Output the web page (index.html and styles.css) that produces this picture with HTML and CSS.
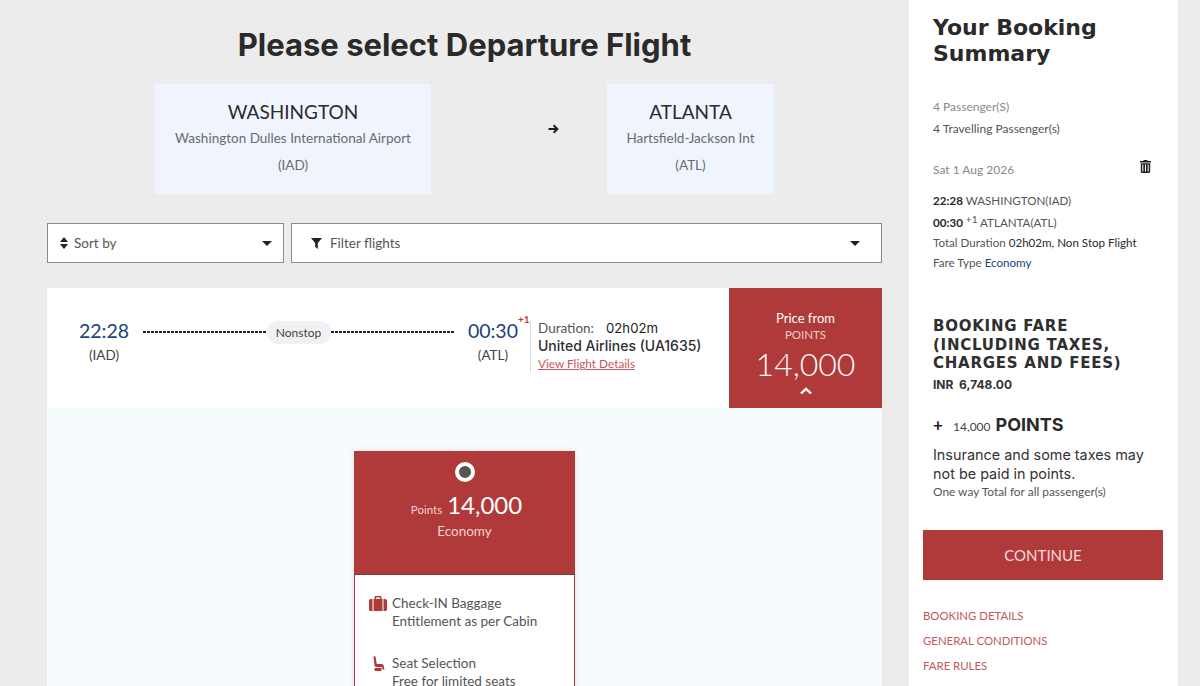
FILE: index.html
```html
<!DOCTYPE html>
<html lang="en">
<head>
    <meta charset="UTF-8">
    <title>Please select Departure Flight</title>
    <link rel="stylesheet" href="styles.css">
</head>
<body>
    <div class="page">
        <main class="main">
            <h1 class="title">Please select Departure Flight</h1>

            <div class="route">
                <div class="city city-from">
                    <div class="city-name">WASHINGTON</div>
                    <div class="city-line">Washington Dulles International Airport</div>
                    <div class="city-line">(IAD)</div>
                </div>
                <div class="route-arrow">
                    <svg width="11" height="10" viewBox="0 0 11 10"><path d="M0.5 5H9M5.6 1.2L9.4 5L5.6 8.8" fill="none" stroke="#222" stroke-width="2"/></svg>
                </div>
                <div class="city city-to">
                    <div class="city-name">ATLANTA</div>
                    <div class="city-line">Hartsfield-Jackson Int</div>
                    <div class="city-line">(ATL)</div>
                </div>
            </div>

            <div class="filters">
                <div class="select select-sort">
                    <svg class="sort-icon" width="8" height="12" viewBox="0 0 8 12"><path d="M4 0L8 5H0ZM0 7H8L4 12Z" fill="#222"/></svg>
                    <span class="select-text">Sort by</span>
                    <span class="caret"></span>
                </div>
                <div class="select select-filter">
                    <svg class="filter-icon" width="11" height="11" viewBox="0 0 11 11"><path d="M0 0H11L6.8 5V11L4.2 9V5Z" fill="#222"/></svg>
                    <span class="select-text">Filter flights</span>
                    <span class="caret"></span>
                </div>
            </div>

            <section class="flight">
                <div class="times">
                    <div class="time-col time-dep">
                        <div class="time">22:28</div>
                        <div class="code">(IAD)</div>
                    </div>
                    <div class="path">
                        <span class="dash"></span>
                        <span class="stop">Nonstop</span>
                        <span class="dash"></span>
                    </div>
                    <div class="time-col time-arr">
                        <div class="time">00:30<sup class="plus">+1</sup></div>
                        <div class="code">(ATL)</div>
                    </div>
                </div>
                <div class="info">
                    <div class="duration"><span class="duration-label">Duration:</span>02h02m</div>
                    <div class="airline">United Airlines (UA1635)</div>
                    <a class="details" href="#">View Flight Details</a>
                </div>
                <div class="price">
                    <div class="price-from">Price from</div>
                    <div class="price-unit">POINTS</div>
                    <div class="price-value">14,000</div>
                    <svg class="chevron" width="12" height="8" viewBox="0 0 12 8"><path d="M1 6.500L6 1.800L11 6.500" fill="none" stroke="#fff" stroke-width="2.400"/></svg>
                </div>
            </section>

            <section class="fares">
                <div class="fare">
                    <div class="fare-head">
                        <span class="radio"></span>
                        <div class="fare-price"><span class="fare-unit">Points</span>14,000</div>
                        <div class="fare-class">Economy</div>
                    </div>
                    <div class="fare-body">
                        <div class="perk">
                            <svg class="perk-icon" width="18" height="15" viewBox="0 0 18 15"><path d="M5.500 3V1.400C5.500 .6 6.100 0 6.900 0H11.100C11.900 0 12.500 .6 12.500 1.400V3H11V1.500H7V3ZM4.500 3H13.500V15H4.500ZM3.500 3V15H1.800C.8 15 0 14.200 0 13.200V4.800C0 3.800 .8 3 1.800 3ZM14.500 3H16.200C17.200 3 18 3.800 18 4.800V13.200C18 14.200 17.200 15 16.200 15H14.500Z" fill="#b03a3a"/></svg>
                            <div>Check-IN Baggage<br>Entitlement as per Cabin</div>
                        </div>
                        <div class="perk">
                            <svg class="perk-icon" width="18" height="15" viewBox="0 0 18 15"><path d="M4.500 0L6.500 .5L7.800 8H12.500C13.500 8 14.300 8.500 14.600 9.500L15.500 13.500H13.500L13 11H7C6.200 11 5.700 10.500 5.500 9.800ZM5.500 12H12.500V15H6.500C5.800 15 5.500 14.500 5.500 14Z" fill="#b03a3a"/></svg>
                            <div>Seat Selection<br>Free for limited seats</div>
                        </div>
                    </div>
                </div>
            </section>
        </main>

        <aside class="summary">
            <h2 class="summary-title">Your Booking Summary</h2>
            <div class="pax pax-total">4 Passenger(S)</div>
            <div class="pax">4 Travelling Passenger(s)</div>

            <div class="trip-date">
                <span>Sat 1 Aug 2026</span>
                <svg width="11" height="13" viewBox="0 0 11 13"><path d="M3.800 0H7.200L7.800 1H11V2.500H0V1H3.200ZM.8 3.300H10.200V11.500C10.200 12.400 9.600 13 8.700 13H2.300C1.400 13 .8 12.400 .8 11.500ZM2.300 4.500V11.600H3.300V4.500ZM5 4.500V11.600H6V4.500ZM7.700 4.500V11.600H8.700V4.500Z" fill="#222"/></svg>
            </div>
            <div class="leg"><b>22:28</b> WASHINGTON(IAD)</div>
            <div class="leg leg-arr"><b>00:30</b> <span class="leg-plus">+1</span> ATLANTA(ATL)</div>
            <div class="leg">Total Duration <span class="dark">02h02m, Non Stop Flight</span></div>
            <div class="leg">Fare Type <span class="blue">Economy</span></div>

            <h3 class="fare-title">BOOKING FARE (INCLUDING TAXES, CHARGES AND FEES)</h3>
            <div class="inr">INR&nbsp; 6,748.00</div>
            <div class="points"><span class="points-plus">+</span><span class="points-num">14,000</span><span class="points-word">POINTS</span></div>
            <p class="note">Insurance and some taxes may not be paid in points.</p>
            <div class="one-way">One way Total for all passenger(s)</div>

            <button class="continue">CONTINUE</button>

            <a class="side-link" href="#">BOOKING DETAILS</a>
            <a class="side-link" href="#">GENERAL CONDITIONS</a>
            <a class="side-link" href="#">FARE RULES</a>
        </aside>
    </div>
</body>
</html>
```
FILE: styles.css
```css
html, body {
    margin: 0;
    height: 686px;
    overflow: hidden;
}

body {
    font-family: Lato, "Open Sans", sans-serif;
    background-color: #ececec;
    color: #333;
}

.page {
    display: flex;
    height: 686px;
    overflow: hidden;
}

.main {
    width: 835px;
    margin-left: 47px;
    display: flex;
    flex-direction: column;
}

.title {
    flex: none;
    margin: 0;
    padding-top: 25px;
    height: 84px;
    box-sizing: border-box;
    text-align: center;
    font-family: Inter, sans-serif;
    font-size: 31px;
    line-height: 40px;
    font-weight: 700;
    color: #2a2a2a;
}

/* route */
.route {
    flex: none;
    display: flex;
    justify-content: center;
}

.city {
    height: 110px;
    box-sizing: border-box;
    padding-top: 14px;
    background-color: #f0f5fd;
    text-align: center;
}

.city-from {
    width: 276px;
}

.city-to {
    width: 167px;
}

.city-name {
    font-size: 19px;
    line-height: 27px;
    color: #2b2b2b;
}

.city-line {
    font-size: 13.500px;
    line-height: 27px;
    color: #666b75;
}

.route-arrow {
    width: 176px;
    box-sizing: border-box;
    padding: 34px 0 0 117px;
}

/* sort and filter */
.filters {
    flex: none;
    display: flex;
    gap: 7px;
    margin-top: 29px;
}

.select {
    height: 40px;
    box-sizing: border-box;
    display: flex;
    align-items: center;
    background-color: #fff;
    border: 1px solid #8c8c8c;
    font-size: 13.500px;
    color: #555;
}

.select-sort {
    width: 237px;
    padding: 0 11px 0 12px;
}

.select-filter {
    flex: 1;
    padding: 0 21px 0 19px;
}

.sort-icon {
    margin-right: 6px;
}

.filter-icon {
    margin-right: 8px;
}

.select-text {
    flex: 1;
}

.caret {
    width: 0;
    height: 0;
    border-left: 5px solid transparent;
    border-right: 5px solid transparent;
    border-top: 5px solid #222;
}

/* flight row */
.flight {
    flex: none;
    display: flex;
    height: 120px;
    margin-top: 25px;
    background-color: #fff;
}

.times {
    width: 471px;
    box-sizing: border-box;
    display: flex;
    padding: 29px 0 0 32px;
}

.time-col {
    text-align: center;
}

.time {
    position: relative;
    font-size: 19.500px;
    line-height: 27px;
    color: #21427d;
}

.plus {
    position: absolute;
    top: -4px;
    left: 100%;
    font-size: 10px;
    line-height: 12px;
    font-weight: 700;
    color: #c8343a;
}

.code {
    font-size: 13.500px;
    line-height: 22px;
    color: #444;
}

.path {
    flex: 1;
    display: flex;
    align-items: center;
    height: 27px;
    margin: 0 14px;
    padding-top: 3px;
    box-sizing: border-box;
}

.dash {
    flex: 1;
    height: 2px;
    background: repeating-linear-gradient(90deg, #222 0, #222 3px, transparent 3px, transparent 4px);
}

.stop {
    width: 64px;
    height: 23px;
    border-radius: 12px;
    background-color: #f0f1f3;
    font-size: 12px;
    line-height: 23px;
    text-align: center;
    color: #444;
}

.info {
    width: 190px;
    height: 52px;
    box-sizing: border-box;
    margin: 33px 0 0 12px;
    padding-left: 7px;
    border-left: 1px solid #ddd;
}

.duration {
    margin-top: -2px;
    font-family: Inter, sans-serif;
    font-size: 13.200px;
    line-height: 18px;
    color: #222;
}

.duration-label {
    margin-right: 12px;
    font-family: Lato, sans-serif;
    font-size: 13.500px;
    color: #555;
}

.airline {
    font-family: Inter, sans-serif;
    font-size: 14px;
    line-height: 17px;
    font-weight: 500;
    color: #2f2f2f;
}

.details {
    display: block;
    font-size: 11.800px;
    line-height: 19px;
    color: #c9565a;
}

.price {
    width: 153px;
    margin-left: auto;
    background-color: #b03a3a;
    text-align: center;
    color: #fff;
    padding-top: 21px;
    box-sizing: border-box;
}

.price-from {
    font-size: 13px;
    line-height: 18px;
}

.price-unit {
    font-size: 11.500px;
    line-height: 16px;
    color: #f1c9c9;
}

.price-value {
    font-size: 32px;
    line-height: 42px;
    font-weight: 300;
}

.chevron {
    display: block;
    margin: 2px auto 0;
}

/* fare card */
.fares {
    flex: 1;
    padding-top: 43px;
    background-color: #f6fbfd;
}

.fare {
    width: 221px;
    margin: 0 auto 0 307px;
    box-shadow: 0 0 6px rgba(0, 0, 0, 0.12);
}

.fare-head {
    height: 124px;
    box-sizing: border-box;
    padding-top: 11px;
    background-color: #b03a3a;
    border-bottom: 1px solid #7f3a3a;
    text-align: center;
    color: #fff;
}

.radio {
    display: block;
    width: 12px;
    height: 12px;
    margin: 0 auto;
    border: 4px solid #fff;
    border-radius: 50%;
    background-color: #555;
}

.fare-price {
    margin-top: 7px;
    padding-left: 4px;
    font-size: 24px;
    line-height: 32px;
}

.fare-unit {
    margin-right: 5px;
    font-size: 11.500px;
    color: #f3d0d0;
}

.fare-class {
    margin-top: -5px;
    font-size: 13.500px;
    line-height: 20px;
    color: #f3d0d0;
}

.fare-body {
    height: 300px;
    box-sizing: border-box;
    padding-top: 19px;
    background-color: #fff;
    border-left: 1px solid #b03a3a;
    border-right: 1px solid #b03a3a;
}

.perk {
    display: flex;
    gap: 5px;
    margin-bottom: 24px;
    padding-left: 14px;
    font-size: 13.500px;
    line-height: 18px;
    color: #555;
}

.perk-icon {
    flex: none;
    margin-top: 2px;
}

/* booking summary */
.summary {
    width: 269px;
    margin-left: 27px;
    box-sizing: border-box;
    padding: 15px 16px 0 24px;
    background-color: #fff;
    font-size: 12px;
    color: #555;
}

.summary-title {
    margin: 0 0 29px;
    font-family: "DejaVu Sans", sans-serif;
    font-size: 22px;
    line-height: 26px;
    font-weight: 700;
    color: #2a2a2a;
}

.pax {
    line-height: 22px;
}

.pax-total {
    color: #888;
}

.trip-date {
    display: flex;
    justify-content: space-between;
    align-items: flex-start;
    margin-top: 20px;
    padding-right: 11px;
    margin-bottom: 11px;
    line-height: 20px;
    color: #888;
}

.leg {
    font-size: 11.600px;
    line-height: 20px;
}

.leg-arr {
    margin-top: 2px;
}

.leg b {
    color: #2a2a2a;
}

.leg-plus {
    position: relative;
    top: -4px;
    font-size: 10px;
}

.dark {
    color: #2a2a2a;
}

.blue {
    color: #21427d;
}

.fare-title {
    max-width: 200px;
    margin: 44px 0 0;
    font-family: "DejaVu Sans", sans-serif;
    font-size: 15px;
    line-height: 18.500px;
    letter-spacing: 0.75px;
    font-weight: 700;
    color: #2f2f2f;
}

.inr {
    margin-top: 2px;
    font-family: Inter, sans-serif;
    font-size: 12px;
    line-height: 20px;
    font-weight: 700;
    color: #333;
}

.points {
    display: flex;
    align-items: baseline;
    margin-top: 18px;
    line-height: 24px;
}

.points-plus {
    width: 20px;
    font-size: 17px;
    font-weight: 700;
    color: #222;
}

.points-num {
    margin-right: 5px;
    font-size: 12px;
    color: #444;
}

.points-word {
    font-family: Inter, sans-serif;
    font-size: 18px;
    font-weight: 700;
    color: #2a2a2a;
}

.note {
    margin: 6px 0 0;
    font-family: Inter, sans-serif;
    font-size: 14.400px;
    line-height: 19px;
    color: #333;
}

.one-way {
    margin-top: 1px;
    line-height: 16px;
    font-size: 11.900px;
    color: #555;
}

.continue {
    display: block;
    width: 240px;
    height: 50px;
    margin: 30px 0 23px -10px;
    border: none;
    background-color: #b03a3a;
    color: #f7dcdc;
    font-family: Lato, sans-serif;
    font-size: 15px;
}

.side-link {
    display: block;
    margin-left: -10px;
    font-size: 11.400px;
    line-height: 25px;
    color: #c0575b;
    text-decoration: none;
}
```
